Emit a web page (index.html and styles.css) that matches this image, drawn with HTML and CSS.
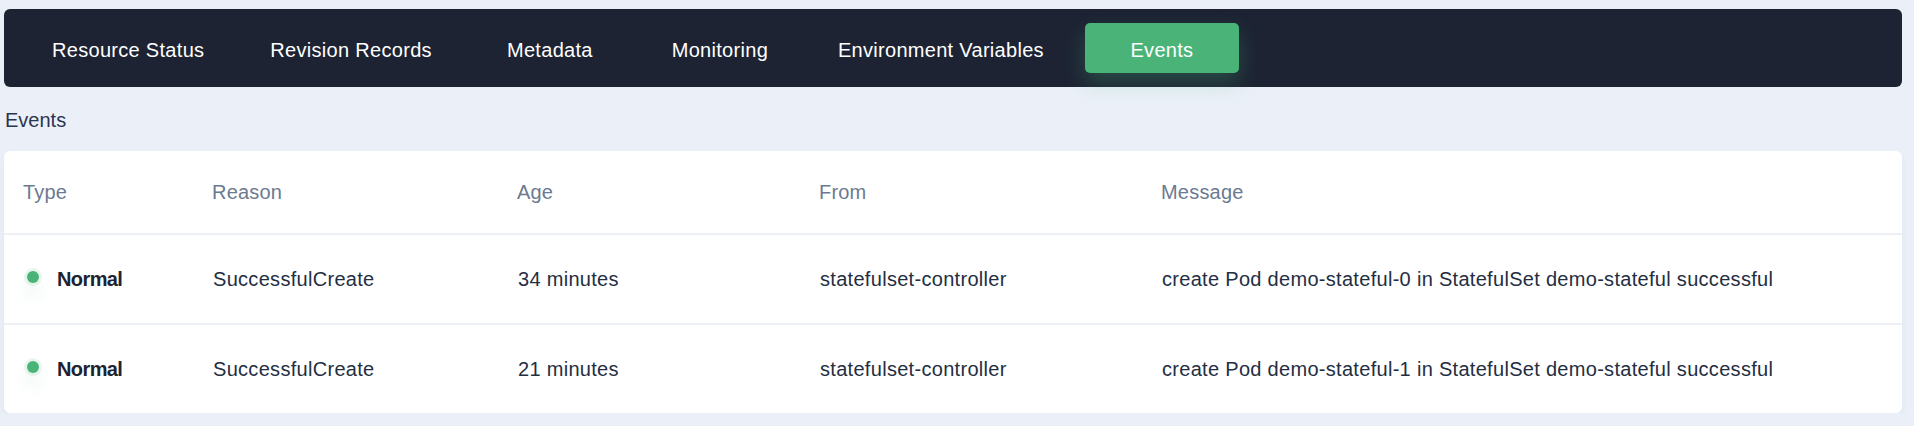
FILE: index.html
```html
<!DOCTYPE html>
<html lang="en">
<head>
<meta charset="utf-8">
<title>Events</title>
<link rel="stylesheet" href="styles.css">
</head>
<body>
<div class="page">
  <nav class="tabs">
    <div class="tab">Resource Status</div>
    <div class="tab">Revision Records</div>
    <div class="tab">Metadata</div>
    <div class="tab">Monitoring</div>
    <div class="tab">Environment Variables</div>
    <div class="tab active">Events</div>
  </nav>
  <div class="section-title">Events</div>
  <div class="card">
    <table class="events">
      <colgroup>
        <col class="c-type"><col class="c-reason"><col class="c-age"><col class="c-from"><col>
      </colgroup>
      <thead>
        <tr><th>Type</th><th>Reason</th><th>Age</th><th>From</th><th>Message</th></tr>
      </thead>
      <tbody>
        <tr>
          <td><span class="type"><span class="dot"></span><b>Normal</b></span></td>
          <td>SuccessfulCreate</td>
          <td>34 minutes</td>
          <td>statefulset-controller</td>
          <td>create Pod demo-stateful-0 in StatefulSet demo-stateful successful</td>
        </tr>
        <tr>
          <td><span class="type"><span class="dot"></span><b>Normal</b></span></td>
          <td>SuccessfulCreate</td>
          <td>21 minutes</td>
          <td>statefulset-controller</td>
          <td>create Pod demo-stateful-1 in StatefulSet demo-stateful successful</td>
        </tr>
      </tbody>
    </table>
  </div>
</div>
</body>
</html>
```

FILE: styles.css
```css
html, body {
  margin: 0;
  padding: 0;
  background: #ebf0f8;
}
body {
  font-family: "Liberation Sans", Arial, sans-serif;
  font-size: 20px;
  line-height: 28px;
  color: #242e42;
}
.page {
  padding: 9px 12px 0 4px;
}
.tabs {
  display: flex;
  align-items: center;
  gap: 16px;
  height: 78px;
  box-sizing: border-box;
  padding: 0 23px;
  background: #1d2333;
  border-radius: 6px;
}
.tab {
  min-width: 154px;
  box-sizing: border-box;
  height: 50px;
  padding: 3px 25px 0;
  display: flex;
  align-items: center;
  justify-content: center;
  color: #ffffff;
  border-radius: 5px;
  white-space: nowrap;
  letter-spacing: 0.3px;
}
.tab.active {
  background: #4ab478;
  box-shadow: 0 10px 22px rgba(74, 180, 120, 0.28);
}
.section-title {
  margin: 19px 0 17px 1px;
  color: #2a3550;
}
.card {
  background: #ffffff;
  border-radius: 6px;
  box-shadow: 0 4px 6px rgba(36, 46, 66, 0.06);
  overflow: hidden;
}
.events {
  width: 100%;
  border-collapse: collapse;
  table-layout: fixed;
}
.c-type { width: 189px; }
.c-reason { width: 305px; }
.c-age { width: 302px; }
.c-from { width: 342px; }
.events th {
  text-align: left;
  font-weight: normal;
  color: #6b7a91;
  padding: 27px 0 27px 19px;
  border-bottom: 2px solid #edf1f6;
  letter-spacing: 0.2px;
}
.events td {
  padding: 30px 0 30px 20px;
  color: #242e42;
  white-space: nowrap;
  letter-spacing: 0.3px;
}
.events tbody tr + tr td {
  border-top: 2px solid #edf1f6;
}
.type {
  display: flex;
  align-items: center;
}
.type b {
  font-weight: bold;
  color: #1c2333;
  margin-left: 18px;
  letter-spacing: -0.6px;
}
.dot {
  width: 12px;
  height: 12px;
  border-radius: 50%;
  background: #4ab478;
  margin-left: 3px;
  margin-top: -5px;
  box-shadow: 0 0 0 3px rgba(74, 180, 120, 0.12), 0 12px 16px rgba(74, 180, 120, 0.18);
}
```
